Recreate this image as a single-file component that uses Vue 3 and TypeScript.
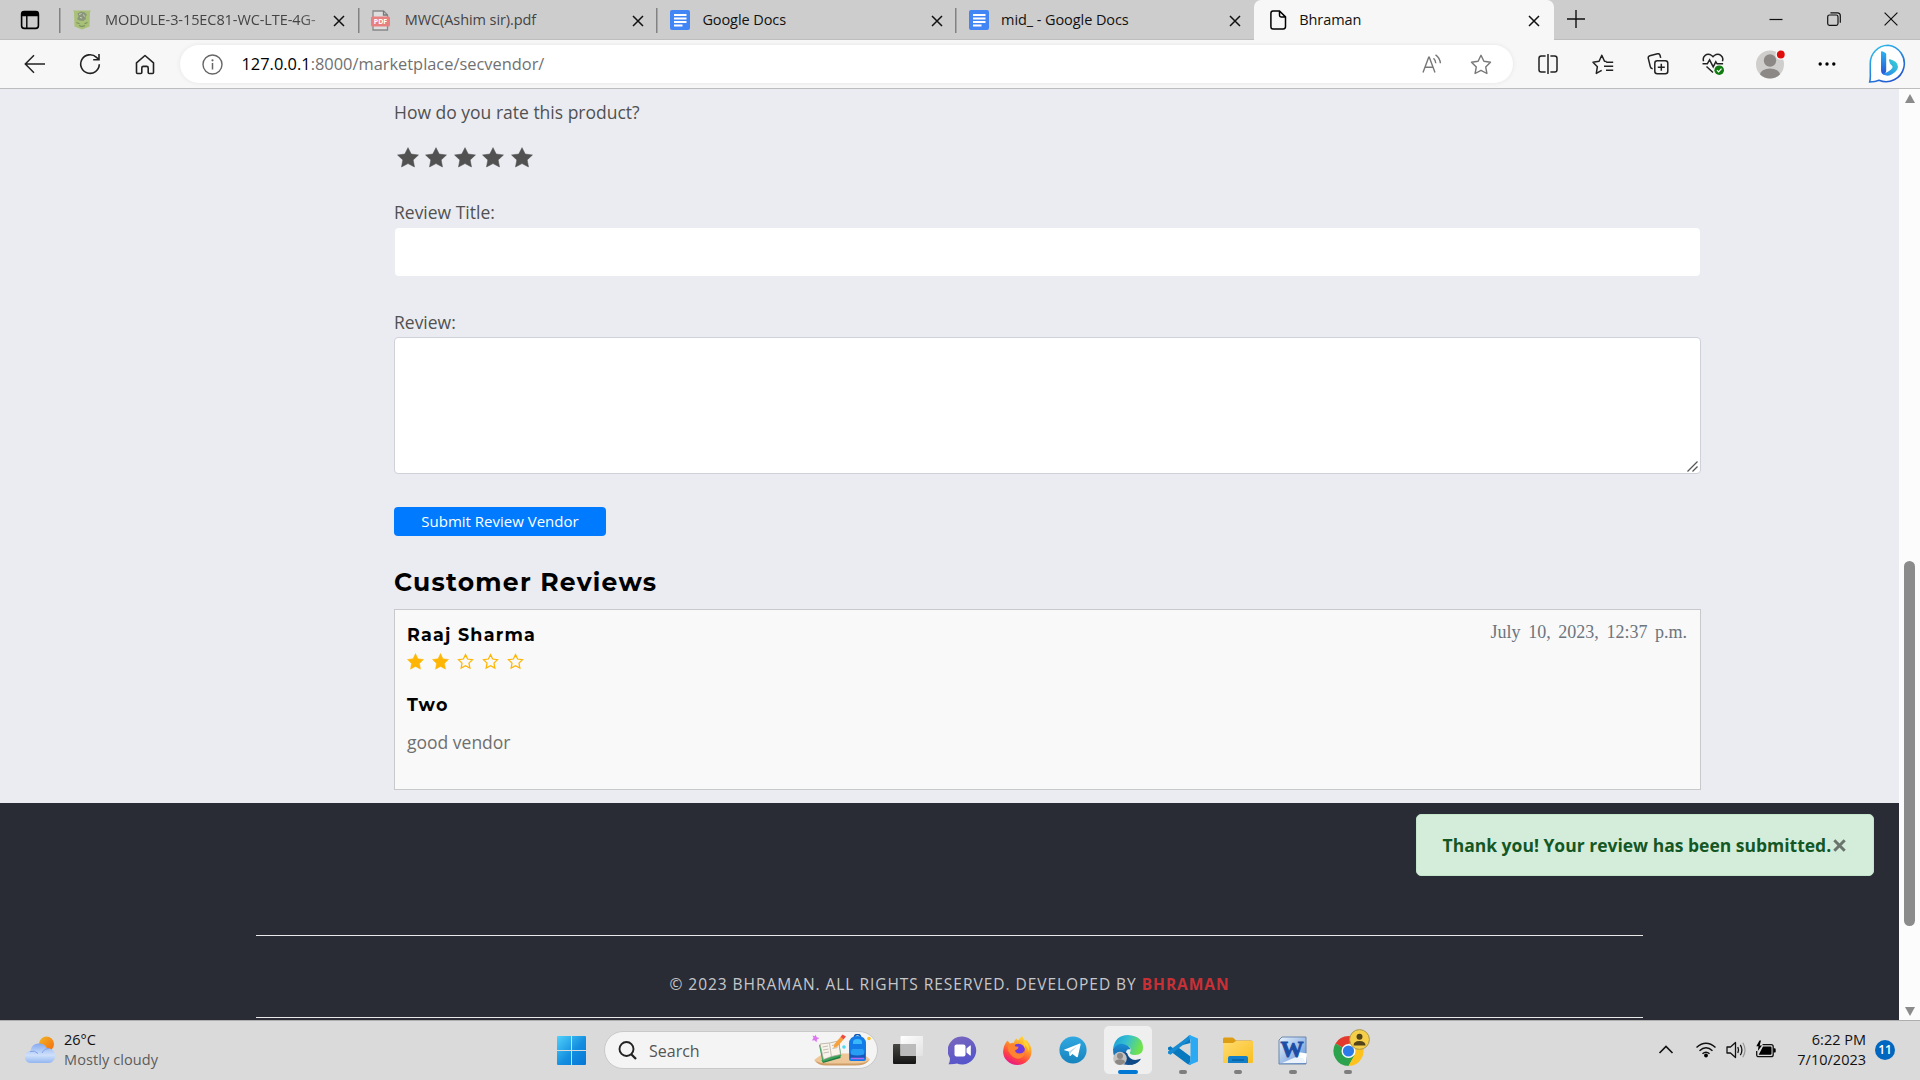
<script setup lang="ts">
interface Tab {
  title: string
  icon: 'module' | 'pdf' | 'docs' | 'page'
  faded?: boolean
  muted?: boolean
  active?: boolean
}

const tabs: Tab[] = [
  { title: 'MODULE-3-15EC81-WC-LTE-4G-', icon: 'module', faded: true, muted: true },
  { title: 'MWC(Ashim sir).pdf', icon: 'pdf', muted: true },
  { title: 'Google Docs', icon: 'docs' },
  { title: 'mid_ - Google Docs', icon: 'docs' },
  { title: 'Bhraman', icon: 'page', active: true },
]

const rating = 2
const starPath =
  'M10 .6l2.9 6.1 6.6.9-4.8 4.7 1.2 6.7L10 15.8 4.1 19l1.2-6.7L.5 7.6l6.6-.9z'
</script>

<template>
  <div class="screen">
    <div class="tabstrip">
      <div class="tab-actions">
        <svg width="20" height="20" viewBox="0 0 20 20">
          <rect x="1.6" y="1.6" width="16.8" height="16.8" rx="2.6" fill="none" stroke="#000" stroke-width="1.6" />
          <path d="M1.6 3.5Q1.6 1.2 4 1.2h12q2.4 0 2.4 2.3V6.300H1.600z" fill="#000" />
          <path d="M6.800 6v12" stroke="#000" stroke-width="1.400" />
        </svg>
      </div>
      <div v-for="(tab, i) in tabs" :key="i" class="tab" :class="{ active: tab.active }">
        <svg v-if="tab.icon === 'module'" class="favicon wide" width="18" height="20" viewBox="0 0 18 20">
          <path d="M0 .5h18l-1 1.500-.5 14.500L9 19.500l-7.500-3L1 2z" fill="#a9c177" />
          <path d="M4.500 3.500L8 1.500l4 1 2 2.500-1.500 1.500.5 2.500-3 2-4-.5L4 9l1.500-2.500z" fill="#8a957b" />
          <path d="M6 4.500l2.500-1M10.500 4.500l1 2M7 7.500l2 .5" stroke="#c9d3bb" fill="none" />
          <path d="M3.500 12.500l3 1.200M11.500 13.700l3-1.200M6 15.500q3 1.700 6 0" stroke="#7c9163" stroke-width="1.200" fill="none" />
        </svg>
        <svg v-else-if="tab.icon === 'pdf'" class="favicon wide" width="19" height="21" viewBox="0 0 19 21">
          <path d="M2 1h10.500l4 4v15H2z" fill="#dedede" stroke="#888" stroke-width="1.300" />
          <path d="M12.500 1v4h4" fill="none" stroke="#777" stroke-width="1.300" />
          <rect x="0" y="6.500" width="19" height="10" rx="1.500" fill="#e88080" />
          <text x="9.500" y="14" text-anchor="middle" font-size="7" font-weight="700" fill="#fff">PDF</text>
        </svg>
        <svg v-else-if="tab.icon === 'docs'" class="favicon" width="20" height="20" viewBox="0 0 20 20">
          <rect width="20" height="20" rx="2" fill="#4285f4" />
          <path d="M4 5h12.500M4 8.500h12.500M4 12h12.500M4 15.500h8.500" stroke="#fff" stroke-width="2" />
        </svg>
        <svg v-else class="favicon" width="17" height="20" viewBox="0 0 17 20">
          <path
            d="M3 .9h6.500l6 6v9.700q0 2.400-2.200 2.400H3.100Q.9 19 .9 16.700V3.200Q.9.900 3 .900zM9.500 1v4.300q0 1.600 1.600 1.600h4.200"
            fill="none" stroke="#000" stroke-width="1.500"
          />
        </svg>
        <span class="tab-title" :class="{ faded: tab.faded, muted: tab.muted }">{{ tab.title }}</span>
        <svg class="tab-close" width="12" height="12" viewBox="0 0 12 12">
          <path d="M1 1l10 10M11 1L1 11" stroke="#111" stroke-width="1.500" />
        </svg>
      </div>
      <svg class="new-tab" width="18" height="18" viewBox="0 0 18 18">
        <path d="M9 0v18M0 9h18" stroke="#111" stroke-width="1.400" />
      </svg>
      <div class="window-controls">
        <svg width="14" height="14" viewBox="0 0 14 14"><path d="M.5 7.500h13" stroke="#111" stroke-width="1.200" /></svg>
        <svg width="14" height="14" viewBox="0 0 14 14">
          <rect x=".7" y="3" width="10.300" height="10.300" rx="1.800" fill="none" stroke="#111" stroke-width="1.200" />
          <path d="M3.400.8h7q2.900 0 2.900 2.900v7" fill="none" stroke="#111" stroke-width="1.200" />
        </svg>
        <svg width="14" height="14" viewBox="0 0 14 14"><path d="M.6.6l12.800 12.800M13.400.6L.6 13.400" stroke="#111" stroke-width="1.200" /></svg>
      </div>
    </div>

    <div class="toolbar">
      <div class="tool">
        <svg width="22" height="20" viewBox="0 0 22 20">
          <path d="M21 10H1.500M10 1.200L1.300 10l8.700 8.800" fill="none" stroke="#222" stroke-width="1.500" />
        </svg>
      </div>
      <div class="tool">
        <svg width="22" height="22" viewBox="0 0 22 22">
          <path d="M20.300 11.300a9.300 9.300 0 1 1-2.800-6.900l2.300 2.100M20 1v5.800h-5.800" fill="none" stroke="#222" stroke-width="1.600" />
        </svg>
      </div>
      <div class="tool">
        <svg width="20" height="21" viewBox="0 0 20 21">
          <path
            d="M1.500 8.800L10 1.500l8.500 7.300v9.700q0 1-1 1h-3.300q-1 0-1-1V14q0-1.600-1.600-1.600H8.400Q6.800 12.400 6.800 14v4.500q0 1-1 1H2.500q-1 0-1-1z"
            fill="none" stroke="#222" stroke-width="1.600" stroke-linejoin="round"
          />
        </svg>
      </div>
      <div class="address">
        <svg class="info" width="21" height="21" viewBox="0 0 21 21">
          <circle cx="10.500" cy="10.500" r="9.500" fill="none" stroke="#666" stroke-width="1.400" />
          <path d="M10.500 9v6.500" stroke="#666" stroke-width="1.500" />
          <circle cx="10.500" cy="6.300" r="1.100" fill="#666" />
        </svg>
        <span class="url"><b>127.0.0.1</b>:8000/marketplace/secvendor/</span>
        <svg class="read" width="20" height="20" viewBox="0 0 20 20">
          <path d="M1 18.500L6.700 3.200h.6L13 18.500M3 13.300h8M11.500 4.300q2 1.800 2.300 5M13.500.8q4.500 3 4.900 8.500" fill="none" stroke="#777" stroke-width="1.400" />
        </svg>
        <svg class="fav" width="22" height="21" viewBox="0 0 22 21">
          <path
            d="M11 1.300l2.900 6 6.600.9-4.800 4.700 1.200 6.600-5.900-3.100-5.900 3.100 1.200-6.600L1.500 8.200l6.600-.9z"
            fill="none" stroke="#777" stroke-width="1.400" stroke-linejoin="round"
          />
        </svg>
      </div>
      <div class="tool">
        <svg width="20" height="20" viewBox="0 0 20 20">
          <path d="M7.600 2H3.300Q1 2 1 4.300v11.400Q1 18 3.300 18h4.300M12.400 2h4.300Q19 2 19 4.300v11.400Q19 18 16.700 18h-4.300M10 0v20" fill="none" stroke="#222" stroke-width="1.500" />
        </svg>
      </div>
      <div class="tool">
        <svg width="22" height="21" viewBox="0 0 22 21">
          <path
            d="M14.500 7.600l-2-.3-2.700-6-2.700 6-6.100.9 4.400 4.500-1.100 6.700 5.400-3.100M14.200 8.300h7M12 12.300h9.200M14 16.300h7.200"
            fill="none" stroke="#222" stroke-width="1.500" stroke-linejoin="round"
          />
        </svg>
      </div>
      <div class="tool">
        <svg width="22" height="22" viewBox="0 0 22 22">
          <rect x="7.800" y="7.800" width="13" height="13" rx="2.500" fill="none" stroke="#222" stroke-width="1.500" />
          <path d="M14.300 10.800v7M10.800 14.300h7M5.700 15.800q-2-.3-2.400-2.200L1.300 5.400q-.5-2 1.500-2.600l7.700-2q1.900-.4 2.500 1.400l.7 2.700" fill="none" stroke="#222" stroke-width="1.500" />
        </svg>
      </div>
      <div class="tool">
        <svg width="22" height="22" viewBox="0 0 22 22">
          <path d="M1.600 8.300Q.3 4.500 3.200 2.300t6.500.2L11 3.700l1.300-1.200q3.500-2.400 6.500-.2t1.600 6M4.500 13.500l6.500 6" fill="none" stroke="#222" stroke-width="1.500" />
          <path d="M.5 10.800h4.800l2.300-4 3.600 7 2.600-5 1.300 2h6" fill="none" stroke="#222" stroke-width="1.500" />
          <circle cx="17.200" cy="17.200" r="4.800" fill="#107c10" />
          <path d="M15 17.200l1.600 1.700 2.900-3.200" fill="none" stroke="#fff" stroke-width="1.200" />
        </svg>
      </div>
      <div class="tool profile">
        <svg width="30" height="30" viewBox="0 0 30 30">
          <clipPath id="avatar"><circle cx="15" cy="15.500" r="14" /></clipPath>
          <circle cx="15" cy="15.500" r="14" fill="#d0cecc" />
          <g clip-path="url(#avatar)" fill="#8c8886">
            <circle cx="15" cy="11.500" r="6.200" />
            <ellipse cx="15" cy="25.500" rx="10" ry="6" />
          </g>
          <circle cx="25.800" cy="5.500" r="5.300" fill="#f7f7f7" />
          <circle cx="25.800" cy="5.500" r="3.900" fill="#e00b0b" />
        </svg>
      </div>
      <div class="tool dots">
        <svg width="18" height="4" viewBox="0 0 18 4">
          <circle cx="2.200" cy="2" r="1.700" /><circle cx="9" cy="2" r="1.700" /><circle cx="15.800" cy="2" r="1.700" />
        </svg>
      </div>
      <div class="tool bing">
        <svg width="40" height="40" viewBox="0 0 40 40">
          <defs>
            <linearGradient id="ring" x1="0" y1="0" x2=".6" y2="1">
              <stop offset="0" stop-color="#2fc6ee" /><stop offset="1" stop-color="#2459cf" />
            </linearGradient>
            <linearGradient id="bstem" x1="0" y1="0" x2="0" y2="1">
              <stop offset="0" stop-color="#28b6f0" /><stop offset="1" stop-color="#2a50d8" />
            </linearGradient>
            <linearGradient id="bbowl" x1="1" y1="0" x2="0" y2="1">
              <stop offset="0" stop-color="#36d8d0" /><stop offset="1" stop-color="#2a7ff0" />
            </linearGradient>
          </defs>
          <path
            d="M20 1.200A18.300 18.300 0 1 1 11 36.300q-3.500 1.700-9.300 1.700.9-3.500.6-9V19.500A18 18 0 0 1 20 1.200z"
            fill="#fff" stroke="url(#ring)" stroke-width="1.600"
          />
          <path d="M13 8q0-1.200 1.200-.7l3 1.500q1 .5 1 1.500V27l-1.400 4q-3.800-.5-3.800-5z" fill="url(#bstem)" />
          <path d="M21.500 15q8.800 2.500 8.500 8-.5 4-6.500 7.500-5.500 3-9.500-1.500 4.500 1 9.500-4 2-2.200.3-3.600-1.700-1-2.900-5z" fill="url(#bbowl)" />
        </svg>
      </div>
    </div>

    <div class="viewport">
      <div class="page">
        <main class="content">
          <label class="label">How do you rate this product?</label>
          <div class="rate">
            <svg v-for="n in 5" :key="n" width="22" height="21" viewBox="0 0 20 20" preserveAspectRatio="none">
              <path :d="starPath" fill="#515151" stroke="#515151" stroke-width=".5" stroke-linejoin="round" />
            </svg>
          </div>
          <label class="label title-label">Review Title:</label>
          <div class="input"></div>
          <label class="label review-label">Review:</label>
          <div class="textarea">
            <svg width="11" height="11" viewBox="0 0 11 11">
              <path d="M.5 10.500l10-10M5.500 10.500l5-5" stroke="#555" stroke-width="1.300" />
            </svg>
          </div>
          <button class="submit">Submit Review Vendor</button>
          <h2>Customer Reviews</h2>
          <article class="review">
            <header>
              <h3>Raaj Sharma</h3>
              <time>July 10, 2023, 12:37 p.m.</time>
            </header>
            <div class="score">
              <svg v-for="n in 5" :key="n" width="17" height="17" viewBox="0 0 20 20">
                <path v-if="n <= rating" :d="starPath" fill="#ffb503" stroke="#ffb503" stroke-width=".5" />
                <path
                  v-else
                  d="M10 1.900l2.500 5.200 5.700.8-4.100 4 1 5.700-5.100-2.700-5.100 2.700 1-5.700-4.100-4 5.700-.8z"
                  fill="none" stroke="#ffb503" stroke-width="1.500"
                />
              </svg>
            </div>
            <h3 class="review-title">Two</h3>
            <p>good vendor</p>
          </article>
        </main>
        <footer class="footer">
          <p class="copyright">© 2023 BHRAMAN. ALL RIGHTS RESERVED. DEVELOPED BY <strong>BHRAMAN</strong></p>
        </footer>
        <div class="alert">
          <strong>Thank you! Your review has been submitted.</strong>
          <svg width="13" height="13" viewBox="0 0 13 13">
            <path d="M1.300 1.300l10.400 10.400M11.700 1.300L1.300 11.700" stroke="#6a746c" stroke-width="3" />
          </svg>
        </div>
      </div>
      <div class="scrollbar">
        <i class="arrow up"></i>
        <i class="thumb"></i>
        <i class="arrow down"></i>
      </div>
    </div>

    <div class="taskbar">
      <div class="weather">
        <svg width="31" height="28" viewBox="0 0 31 28">
          <defs>
            <linearGradient id="sun" x1="0" y1="0" x2="1" y2="1">
              <stop offset="0" stop-color="#f0b72a" /><stop offset="1" stop-color="#f6690a" />
            </linearGradient>
            <linearGradient id="cloud" x1="0" y1="0" x2="0" y2="1">
              <stop offset="0" stop-color="#86aaf0" /><stop offset=".6" stop-color="#cfe0fa" /><stop offset="1" stop-color="#93b6f1" />
            </linearGradient>
          </defs>
          <circle cx="21.500" cy="8" r="7.500" fill="url(#sun)" />
          <path d="M6 27a5.700 5.700 0 0 1-.5-12A8.700 8.700 0 0 1 22 12.500 7.200 7.200 0 0 1 24 27z" fill="url(#cloud)" />
          <path d="M5 15.500q5-1.500 8 2M17 17q2-4.500 7.500-4.500" fill="none" stroke="#7fa3ea" stroke-width="1" />
        </svg>
        <div class="weather-text"><span>26°C</span><span class="condition">Mostly cloudy</span></div>
      </div>
      <svg class="start" width="29" height="29" viewBox="0 0 29 29">
        <defs>
          <linearGradient id="win" x1="0" y1="0" x2="1" y2="1">
            <stop offset="0" stop-color="#4fd1fb" /><stop offset=".55" stop-color="#148ee0" /><stop offset="1" stop-color="#0676d6" />
          </linearGradient>
        </defs>
        <path d="M1 0h13v14H0V1q0-1 1-1zM15 0h13q1 0 1 1v13H15zM0 15h14v14H1q-1 0-1-1zM15 15h14v13q0 1-1 1H15z" fill="url(#win)" />
      </svg>
      <div class="search">
        <svg width="19" height="19" viewBox="0 0 19 19">
          <circle cx="8.500" cy="8" r="7" fill="none" stroke="#222" stroke-width="1.900" />
          <path d="M13 13l5 5" stroke="#222" stroke-width="2.300" />
        </svg>
        <span>Search</span>
        <svg class="school" width="62" height="32" viewBox="0 0 62 32">
          <path d="M3 26l9-6.500h40l7 6q-3 5.500-15 5.500H15q-8 0-12-5z" fill="#edc797" />
          <path d="M4 27q6 2.500 12 2.500h28q10 0 14-3.500-3 5.500-14 5.500H15q-7 0-11-4.500z" fill="#cf9d67" />
          <path d="M10.500 26l19-4.500v2.500L12 29z" fill="#207a45" />
          <path d="M8 11l10-1.500 10-2 2.300 14.500L11.500 28z" fill="#3aa55b" />
          <path d="M9 10l9.500-1 9-2 2 13.500-9 2-8 3z" fill="#f8f4ec" stroke="#aaa194" stroke-width=".7" />
          <path d="M18.500 9.500l2 13.500M11.500 13l5.500-1M12 16l5.500-1M12.500 19l5.500-1M21 11.500l4.500-1M21.500 14.500l5-1" stroke="#aca59a" stroke-width=".7" />
          <path d="M22.500 14l1-4 6-7 3 2.500-6 7z" fill="#f8a13b" /><path d="M29.500 3l2-2.500 3.500 2-2.500 3z" fill="#ee4b3f" />
          <path d="M4.500.5l1.200 2.800L8.500 4 6 5.500l-.5 2.800-2-2L.8 6.500 2.500 4 1.500 1.500l2.300.8z" fill="#de75f0" />
          <circle cx="33" cy="13" r="1.800" fill="#4ddaf0" /><circle cx="58" cy="4.500" r="1.800" fill="#ffbe26" />
          <path d="M43.500 3q0-2.500 3-2.500t3 2.500" fill="none" stroke="#0b59b5" stroke-width="1.500" />
          <path d="M38 25V10q0-8 8.500-8T55 10v15q0 2-2 2H40q-2 0-2-2z" fill="#127be8" />
          <path d="M42 8q0-3 4.500-3T51 8v2h-9z" fill="#39b9fa" />
          <path d="M39 24v-3q0-6 7.500-6t7.500 6v3z" fill="#1557bb" />
          <path d="M41 15h11q2 3 1 5.500-7 2-13 0-1-2.500 1-5.500z" fill="#279df4" /><path d="M40 24.500h13" stroke="#b56bf2" stroke-width="1.500" />
        </svg>
      </div>
      <div class="apps">
        <div class="app">
          <svg width="30" height="28" viewBox="0 0 30 28">
            <defs>
              <linearGradient id="tv1" x1="0" y1="0" x2="0" y2="1"><stop offset="0" stop-color="#484844" /><stop offset="1" stop-color="#161616" /></linearGradient>
              <linearGradient id="tv2" x1="0" y1="0" x2="1" y2="1"><stop offset="0" stop-color="#fff" /><stop offset="1" stop-color="#e2e2e2" /></linearGradient>
            </defs>
            <rect y="8" width="23" height="20" rx="1" fill="url(#tv1)" />
            <rect x="7.500" width="22.500" height="20" rx="1" fill="url(#tv2)" />
            <path d="M7.500 8h15.500v12H7.500z" fill="#bbb" />
          </svg>
        </div>
        <div class="app">
          <svg width="29" height="29" viewBox="0 0 29 29">
            <defs>
              <linearGradient id="chat" x1="0" y1="0" x2=".4" y2="1"><stop offset="0" stop-color="#7b67bd" /><stop offset="1" stop-color="#5655cb" /></linearGradient>
            </defs>
            <path d="M14.500.5A14 14 0 1 1 9 27.500q-3 1-8.500.8 1.800-3 1.300-6.500A14 14 0 0 1 14.500.5z" fill="url(#chat)" />
            <rect x="6.500" y="8.500" width="11" height="12" rx="2" fill="#fff" />
            <path d="M18.500 12.500l3.500-3h.8v10H22l-3.500-3z" fill="#fff" />
          </svg>
        </div>
        <div class="app">
          <svg width="29" height="30" viewBox="0 0 29 30">
            <defs>
              <linearGradient id="fox" x1=".8" y1="0" x2=".3" y2="1">
                <stop offset="0" stop-color="#ffe63c" /><stop offset=".4" stop-color="#ff9a28" /><stop offset=".75" stop-color="#ff3f45" /><stop offset="1" stop-color="#e4178d" />
              </linearGradient>
            </defs>
            <path d="M4.500 5.500l2.500 3q1.500-1 4-.8 0-2.400 2.500-4.200l1 2Q16 5 19 .5q1 3.500 4 5.500l.5-1q5 5.500 5 11.500a14.200 13.500 0 0 1-28.400 0Q.5 10 4.500 5.500z" fill="url(#fox)" />
            <circle cx="15.500" cy="15" r="6.300" fill="#6f3be0" />
            <path d="M5 11q2.500-3 6-2.300l1.500 2.800 3 .3q0 2.500-3.500 3.700.5 3 4.500 3 4 0 5-3.500 1 5.500-3.500 8T8 20q-4-4-3-9z" fill="#ff8330" />
            <path d="M16 7q5 1 6 6.500.5-4-2-7.500l2-1q5 5 4 12-1-4-3-6-2-3-7-4z" fill="#ffd33a" />
          </svg>
        </div>
        <div class="app">
          <svg width="28" height="28" viewBox="0 0 28 28">
            <defs><linearGradient id="tg" x1="0" y1="0" x2="0" y2="1"><stop offset="0" stop-color="#31a8e1" /><stop offset="1" stop-color="#1683bd" /></linearGradient></defs>
            <circle cx="14" cy="14" r="13.600" fill="url(#tg)" />
            <path d="M5 13.800L20.800 7.600q1-.2.800 1l-2.700 11.900q-.4 1.200-1.500.5l-4-3-2 2q-.7.400-.8-.5l-.8-4-4.500-1.300z" fill="#fff" />
            <path d="M10 15.500l8-5.300-6.200 6.400-.8 3z" fill="#b9d8e9" />
          </svg>
        </div>
        <div class="app current">
          <svg width="30" height="30" viewBox="0 0 30 30">
            <defs>
              <linearGradient id="e1" x1="0" y1="0" x2="1" y2=".3"><stop offset="0" stop-color="#149bd8" /><stop offset=".5" stop-color="#36bfd0" /><stop offset="1" stop-color="#6fe24e" /></linearGradient>
              <linearGradient id="e2" x1="0" y1="0" x2="0" y2="1"><stop offset="0" stop-color="#1a8ed6" /><stop offset="1" stop-color="#124f93" /></linearGradient>
            </defs>
            <path d="M0 14Q2 0 15 0q15 1 15 13 0 7-8 7-7 0-4.500-4 1-2-1-4Q8 6 0 14z" fill="url(#e1)" />
            <path d="M0 14Q5 7 12 9.500q5 2 5.500 5-4.500-1-4.500 4 1 7 9 7 3 0 5.500-1.500Q23 30 15 30 0 29 0 14z" fill="url(#e2)" />
            <path d="M10 17q0 12 9 12.800 6-.8 9-6-11 4-14-5.800z" fill="#104a86" />
            <circle cx="7" cy="23.500" r="6.800" fill="#c4c2c0" /><circle cx="7" cy="21" r="3" fill="#8c8886" />
            <path d="M1.800 27q1-2.800 5.200-2.800t5.200 2.800Q10 30 7 30t-5.200-3z" fill="#8c8886" />
          </svg>
          <i></i>
        </div>
        <div class="app running">
          <svg width="30" height="30" viewBox="0 0 30 30">
            <path d="M21.500 0L6 14 2.500 11.300 0 12.500v2L19.500 29l3 1v-8.500L9 11.500 22.500 8z" fill="#0878bf" />
            <path d="M0 16.500v2l2.500 1.200L22.500 4V0z" fill="#168bd2" />
            <path d="M21.500 0L30 3.500v23L21.500 30l-1-1 2-3V5l-2-4z" fill="#2ba9f2" />
          </svg>
          <i></i>
        </div>
        <div class="app running">
          <svg width="30" height="28" viewBox="0 0 30 28">
            <defs><linearGradient id="fold" x1="0" y1="0" x2="1" y2="1"><stop offset="0" stop-color="#ffdb70" /><stop offset="1" stop-color="#f9bf20" /></linearGradient></defs>
            <path d="M0 3q0-1.500 1.500-1.500H9q1 0 2 1l2 2h15q2 0 2 1.500v7H0z" fill="#dc9c13" />
            <path d="M0 7h10l3-2h17v21q0 1-1 1H1q-1 0-1-1z" fill="url(#fold)" />
            <path d="M5 22q0-2 2-2h16q2 0 2 2v5H5z" fill="#117fc9" /><path d="M9 24h12" stroke="#075fa3" stroke-width="1.500" />
          </svg>
          <i></i>
        </div>
        <div class="app running word">
          <svg width="29" height="29" viewBox="0 0 29 29">
            <defs><linearGradient id="word" x1="0" y1="0" x2="1" y2="1"><stop offset="0" stop-color="#eaf3fc" /><stop offset="1" stop-color="#5d8fd8" /></linearGradient></defs>
            <path d="M4 1h24v27H1V4z" fill="url(#word)" stroke="#6a86ae" stroke-width="1" />
            <path d="M20 16l9 1.500-1 9.500-10-1.500z" fill="#fff" /><path d="M4 27l14-6 7 1 3 5z" fill="#edf3fb" />
            <text x="14" y="20.500" text-anchor="middle" font-family="Liberation Serif, serif" font-size="23" font-weight="700" fill="#1d4ea6" stroke="#1d4ea6" stroke-width=".9">W</text>
          </svg>
          <i></i>
        </div>
        <div class="app running chrome">
          <svg width="38" height="38" viewBox="0 0 38 38">
            <path d="M15.500 23L2.500 15.500A15 15 0 0 1 28.500 15.500z" fill="#e23b2e" />
            <path d="M15.500 23L2.500 15.500A15 15 0 0 0 15.500 38L22 27z" fill="#2ca24c" />
            <path d="M15.500 23h-1l7 4-6 11A15 15 0 0 0 28.500 15.500h-13z" fill="#fcc31e" />
            <circle cx="15.500" cy="23" r="7" fill="#fff" /><circle cx="15.500" cy="23" r="5.600" fill="#2d7be9" />
            <circle cx="26.500" cy="11.500" r="9.900" fill="#f5cf4a" stroke="#aa974d" stroke-width="1" />
            <circle cx="26.500" cy="8.800" r="3" fill="#51431a" />
            <path d="M20.500 17.500q0-4.500 6-4.500t6 4.500z" fill="#51431a" />
          </svg>
          <i></i>
        </div>
      </div>
      <div class="tray">
        <svg class="chevron" width="20" height="20" viewBox="0 0 20 20"><path d="M3.500 13L10 6.500l6.500 6.500" fill="none" stroke="#111" stroke-width="1.600" /></svg>
        <svg width="20" height="20" viewBox="0 0 20 20">
          <path d="M.5 7.500q9.500-8.500 19 0M3.500 10.700q6.500-6 13 0M6.500 13.800q3.500-3.200 7 0" fill="none" stroke="#111" stroke-width="1.500" />
          <circle cx="10" cy="15.500" r="1.900" />
        </svg>
        <svg width="20" height="20" viewBox="0 0 20 20">
          <path d="M1 7h3.500l5-4.500v15l-5-4.500H1z" fill="none" stroke="#111" stroke-width="1.300" stroke-linejoin="round" />
          <path d="M11.800 7q1.500 3 0 6M14.300 4.800q3.200 5.200 0 10.400" fill="none" stroke="#111" stroke-width="1.300" />
          <path d="M16.800 2.800q4.500 7.200 0 14.400" fill="none" stroke="#999" stroke-width="1.200" />
        </svg>
        <svg width="20" height="20" viewBox="0 0 20 20">
          <path d="M6.500 4.700h8.700q2 0 2 2v8q0 2-2 2H2.700q-2 0-2-2V11" fill="none" stroke="#111" stroke-width="1.300" />
          <path d="M7 6.500h7.500q1 0 1 1v6.300q0 1-1 1H2.700zM17.500 8.200h1q1.200 0 1.200 1.200v2q0 1.200-1.200 1.200h-1zM3.500.5L.3 6.300h2.200L1.800 11l4.200-5.500H3.700L5 .5z" />
        </svg>
        <div class="clock"><span>6:22 PM</span><span>7/10/2023</span></div>
        <span class="badge">11</span>
      </div>
    </div>
  </div>
</template>

<style>
body {
  margin: 0;
}
</style>

<style scoped>
.screen {
  width: 1920px;
  height: 1080px;
  display: flex;
  flex-direction: column;
  overflow: hidden;
  font-family: 'Open Sans', 'Noto Sans', sans-serif;
  color: #111;
}
svg {
  display: block;
  flex: none;
}
.tabstrip {
  height: 40px;
  flex: none;
  display: flex;
  background: #cdcdcd;
  box-shadow: inset 0 -1px #bdbdbd;
}
.tab-actions {
  width: 59px;
  padding: 10px 0 0 20px;
  box-sizing: border-box;
}
.tab {
  width: 298.7px;
  box-sizing: border-box;
  display: flex;
  align-items: center;
  padding: 0 12.5px 0 13.500px;
  background: linear-gradient(#828282, #828282) 0 8px / 1.5px 25px no-repeat;
}
.tab.active {
  width: 300px;
  background: #f7f7f7;
  border-radius: 7px 7px 0 0;
  padding-left: 16px;
  padding-right: 13.500px;
}
.favicon {
  margin-right: 12.500px;
}
.favicon.wide {
  margin-right: 14.500px;
}
.tab-title {
  flex: 1;
  white-space: nowrap;
  font-size: 14.5px;
  line-height: 24px;
  letter-spacing: -0.08px;
}
.tab-title.muted {
  color: #444;
}
.tab-title.faded {
  mask-image: linear-gradient(90deg, #000 85%, rgba(0, 0, 0, 0.3));
}
.tab-close {
  margin-top: 1px;
}
.new-tab {
  margin: 10px 0 0 13px;
}
.window-controls {
  margin-left: auto;
  padding: 12px 22px 0 0;
  display: flex;
  gap: 43.5px;
}
.toolbar {
  height: 48px;
  flex: none;
  display: flex;
  align-items: center;
  padding-left: 7px;
  background: #f7f7f7;
  border-bottom: 1px solid #bdbdbd;
}
.tool {
  width: 55px;
  flex: none;
  display: flex;
  justify-content: center;
}
.profile {
  width: 58px;
}
.dots {
  width: 57px;
}
.bing {
  width: 64px;
}
.address {
  width: 1333px;
  height: 38px;
  margin: 0 7.5px 0 8px;
  border-radius: 19px;
  box-sizing: border-box;
  padding: 0 21px 0 22px;
  display: flex;
  align-items: center;
  background: #fff;
  box-shadow: 0 0 4px #e4e4e4;
}
.url {
  flex: 1;
  margin-left: 18.500px;
  font-size: 16.4px;
  line-height: 30px;
  color: #717171;
}
.url b {
  font-weight: 400;
  color: #000;
}
.read {
  margin-right: 28.500px;
}
.viewport {
  height: 931px;
  flex: none;
  display: flex;
}
.page {
  width: 1899px;
  position: relative;
  display: flex;
  flex-direction: column;
  background: #ebecf1;
}
.content {
  box-sizing: border-box;
  height: 714px;
  width: 1701px;
  padding: 10px 0 0 394px;
  display: flex;
  flex-direction: column;
}
.label {
  font-size: 17.5px;
  line-height: 26px;
  height: 26px;
  color: #515151;
}
.rate {
  display: flex;
  gap: 6.400px;
  margin: 22px 0 0 3px;
  height: 21px;
}
.title-label {
  margin-top: 31px;
}
.input {
  margin: 3px 0 0 1px;
  height: 48px;
  border-radius: 4px;
  background: #fff;
  width: 1305px;
}
.review-label {
  margin-top: 33px;
}
.textarea {
  box-sizing: border-box;
  margin-top: 2px;
  height: 137px;
  border: 1px solid #ced0da;
  border-radius: 4px;
  background: #fff;
  display: flex;
  align-items: flex-end;
  justify-content: flex-end;
  padding: 1px 2px;
}
.submit {
  margin-top: 33px;
  width: 212px;
  height: 29px;
  border: 0;
  border-radius: 4px;
  padding: 0;
  background: #007bff;
  color: #fff;
  font: 15px/29px 'Open Sans', sans-serif;
}
h2,
h3 {
  margin: 0;
  color: #000;
  font-family: Montserrat, Inter, sans-serif;
  font-weight: 700;
}
h2 {
  margin-top: 31px;
  font-size: 25px;
  line-height: 30px;
  letter-spacing: 1.25px;
}
h3 {
  font-size: 17.5px;
  line-height: 20px;
  letter-spacing: 1.25px;
}
.review {
  box-sizing: border-box;
  margin-top: 12px;
  height: 181px;
  border: 1px solid #c8c9cb;
  background: #f9f9f9;
  padding: 15px 13px 0 12px;
}
.review header {
  display: flex;
  justify-content: space-between;
}
time {
  margin-top: -3px;
  font: 18px/20px 'Liberation Serif', serif;
  word-spacing: 3.100px;
  color: #6c757d;
}
.score {
  display: flex;
  gap: 8px;
  margin-top: 8px;
  height: 17px;
}
.review-title {
  margin-top: 25px;
}
.review p {
  margin: 14px 0 0;
  font-size: 17.5px;
  line-height: 26px;
  color: #6f6f6f;
}
.footer {
  height: 217px;
  box-sizing: border-box;
  padding: 132px 256px 0;
  background: #292c35;
}
.copyright {
  margin: 0;
  border-top: 1px solid #e9e9ea;
  border-bottom: 1px solid #e9e9ea;
  padding-top: 38px;
  height: 43px;
  text-align: center;
  font-size: 15.5px;
  line-height: 20px;
  letter-spacing: 0.96px;
  color: #c6c7ca;
}
.copyright strong {
  color: #c93036;
}
.alert {
  position: absolute;
  right: 25px;
  top: 725px;
  width: 458px;
  height: 62px;
  box-sizing: border-box;
  border: 1px solid #c3e6cb;
  border-radius: 5px;
  background: #d4edda;
  color: #155724;
  display: flex;
  align-items: center;
  padding-left: 25.500px;
  font-size: 17.5px;
  white-space: nowrap;
}
.alert svg {
  margin-left: 2px;
}
.scrollbar {
  width: 21px;
  background: #fcfcfc;
  display: flex;
  flex-direction: column;
  align-items: center;
}
.arrow {
  border: 5.500px solid transparent;
  border-top: 0;
  border-bottom: 9px solid #8b8b8b;
  margin-top: 5px;
}
.arrow.down {
  border-bottom: 0;
  border-top: 9px solid #8b8b8b;
  margin-top: 81px;
}
.thumb {
  width: 11px;
  height: 365px;
  border-radius: 6px;
  margin-top: 458px;
  background: #8b8b8b;
}
.taskbar {
  height: 60px;
  flex: none;
  box-sizing: border-box;
  border-top: 1px solid #aeaeae;
  padding-bottom: 1px;
  background: #dadada;
  display: flex;
  align-items: center;
}
.weather {
  width: 557px;
  box-sizing: border-box;
  padding-left: 25px;
  display: flex;
  align-items: center;
}
.weather-text,
.clock {
  display: flex;
  flex-direction: column;
  font-size: 14.5px;
  line-height: 20px;
  margin-top: -1px;
}
.weather-text {
  margin-left: 8px;
}
.condition {
  color: #5c5c5c;
  letter-spacing: 0.1px;
}
.search {
  width: 274px;
  height: 38px;
  margin: 0 2px 0 18px;
  box-sizing: border-box;
  border-radius: 19px;
  border: 1px solid #c9c9c9;
  background: #f4f4f4;
  display: flex;
  align-items: center;
  padding: 0 4px 0 13px;
  font-size: 16px;
  color: #555;
}
.search span {
  margin: 2px 0 0 12px;
}
.school {
  margin-left: auto;
}
.apps {
  display: flex;
}
.app {
  width: 55px;
  height: 48px;
  position: relative;
  display: flex;
  align-items: center;
  justify-content: center;
}
.app i {
  position: absolute;
  bottom: 0;
  left: 23.500px;
  width: 8px;
  height: 4px;
  border-radius: 2px;
  background: #7e7e7e;
}
.current {
  width: 48px;
  margin: 0 3.500px;
  background: #efefef;
  border-radius: 5px;
}
.current i {
  width: 20px;
  left: 14px;
  background: #0078d4;
}
.word svg {
  margin-right: 1px;
}
.chrome svg {
  margin: -7px 0 0 8px;
}
.tray {
  margin-left: auto;
  padding-right: 25px;
  display: flex;
  align-items: center;
  gap: 10px;
}
.chevron {
  margin-right: 10px;
}
.clock {
  width: 80px;
  text-align: right;
}
.badge {
  width: 20px;
  height: 20px;
  border-radius: 50%;
  background: #0067c0;
  color: #fff;
  font-size: 12px;
  font-weight: 600;
  line-height: 20px;
  text-align: center;
  margin-left: -1px;
}
</style>
